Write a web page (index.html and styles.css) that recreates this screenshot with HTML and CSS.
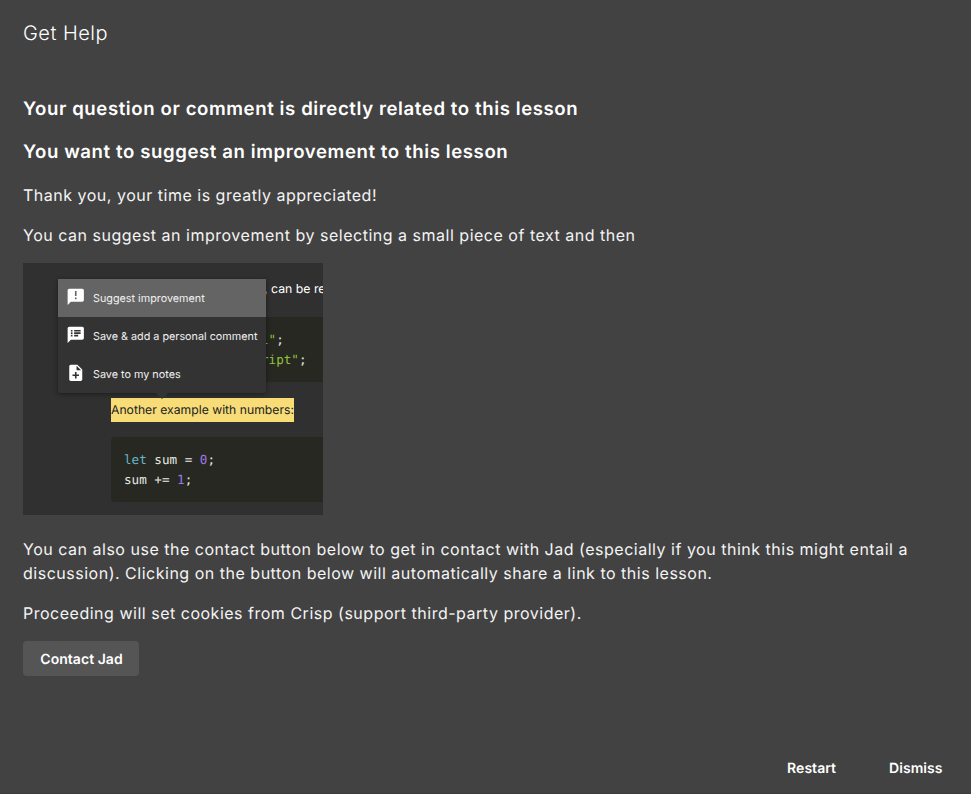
FILE: index.html
```html
<!DOCTYPE html>
<html lang="en">
<head>
<meta charset="utf-8">
<title>Get Help</title>
<link rel="stylesheet" href="styles.css">
</head>
<body>
<main class="dialog">
  <h1 class="title"><span>Get Help</span></h1>
  <section class="content">
    <h2 class="heading"><span>Your question or comment is directly related to this lesson</span></h2>
    <h2 class="heading"><span>You want to suggest an improvement to this lesson</span></h2>
    <p><span>Thank you, your time is greatly appreciated!</span></p>
    <p><span>You can suggest an improvement by selecting a small piece of text and then</span></p>
    <div class="preview">
      <div class="lesson">
        <div class="lesson-text"><span>, can be re</span></div>
        <pre class="code code-first"><span class="str">l"</span>;
<span class="str">ript"</span>;</pre>
        <div class="marked-row"><mark>Another example with numbers:</mark></div>
        <pre class="code"><span class="kw">let</span> sum = <span class="num">0</span>;
sum += <span class="num">1</span>;</pre>
      </div>
      <div class="menu">
        <div class="item active"><svg viewBox="0 0 24 24"><path d="M20 2H4c-1.1 0-1.99.9-1.99 2L2 22l4-4h14c1.1 0 2-.9 2-2V4c0-1.1-.9-2-2-2zm-7 9h-2V5h2v6zm0 4h-2v-2h2v2z"/></svg><span>Suggest improvement</span></div>
        <div class="item"><svg viewBox="0 0 24 24"><path d="M20 2H4c-1.1 0-1.99.9-1.99 2L2 22l4-4h14c1.1 0 2-.9 2-2V4c0-1.1-.9-2-2-2zM8 14H6v-2h2v2zm0-3H6V9h2v2zm0-3H6V6h2v2zm7 6h-5v-2h5v2zm3-3h-8V9h8v2zm0-3h-8V6h8v2z"/></svg><span>Save &amp; add a personal comment</span></div>
        <div class="item"><svg viewBox="0 0 24 24"><path d="M14 2H6c-1.1 0-1.99.9-1.99 2L4 20c0 1.1.89 2 1.99 2H18c1.1 0 2-.9 2-2V8l-6-6zm2 14h-3v3h-2v-3H8v-2h3v-3h2v3h3v2zm-3-7V3.5L18.5 9H13z"/></svg><span>Save to my notes</span></div>
      </div>
    </div>
    <p><span>You can also use the contact button below to get in contact with Jad (especially if you think this might entail a discussion). Clicking on the button below will automatically share a link to this lesson.</span></p>
    <p><span>Proceeding will set cookies from Crisp (support third-party provider).</span></p>
    <button class="contact" type="button"><span>Contact Jad</span></button>
  </section>
  <footer class="actions">
    <button type="button"><span>Restart</span></button>
    <button type="button"><span>Dismiss</span></button>
  </footer>
</main>
</body>
</html>
```
FILE: styles.css
```css
* { box-sizing: border-box; }
body {
  margin: 0;
  background: #424242;
  color: #fff;
  font-family: Inter, sans-serif;
  font-size: 16px;
  font-weight: 400;
  line-height: 24px;
  letter-spacing: 0.51px;
  text-rendering: geometricPrecision;
}
.dialog {
  display: flex;
  flex-direction: column;
  height: 794px;
  padding: 17px 23px 8px;
  border-bottom: 1px solid #3b3b3b;
}
.title {
  margin: 0 0 44px;
  font-size: 20px;
  font-weight: 300;
  line-height: 32px;
  letter-spacing: 0.48px;
}
.content { flex: 1; }
.content p { color: #f4f4f4; }
.heading {
  margin: 0 0 11px;
  font-size: 18.6px;
  font-weight: 600;
  line-height: 32px;
  letter-spacing: 0.59px;
}
.heading + p { margin-top: 15px; }
p { margin: 0 0 16px; }
.preview {
  position: relative;
  width: 300px;
  height: 252px;
  margin-bottom: 22px;
  overflow: hidden;
  background: #303030;
  letter-spacing: 0;
}
.lesson { padding: 14px 0 0 88px; }
.lesson-text {
  padding-left: 153px;
  font-size: 12.3px;
  white-space: nowrap;
}
.code {
  height: 65px;
  margin: 15px 0 0;
  padding: 13px;
  border-radius: 4px 0 0 4px;
  background: #272822;
  color: #e8e8e2;
  font: 12.6px/20px "DejaVu Sans Mono", monospace;
}
.code-first {
  margin-top: 16px;
  padding-left: 150px;
}
.str { color: #92c23a; }
.kw { color: #66b5c8; }
.num { color: #9d79e8; }
.marked-row { height: 24px; margin-top: 16px; }
mark {
  display: block;
  width: 183px;
  background: #f7dc78;
  color: #222;
  font-size: 12.2px;
  white-space: nowrap;
}
.menu {
  position: absolute;
  top: 16px;
  left: 35px;
  width: 208px;
  border-radius: 2px;
  background: #333;
  box-shadow: 0 1px 5px rgba(0, 0, 0, 0.45);
}
.menu::after {
  content: "";
  position: absolute;
  top: 100%;
  left: 98px;
  border: 6px solid transparent;
  border-top-color: #333;
  border-bottom: 0;
}
.item {
  display: flex;
  align-items: center;
  gap: 8px;
  height: 38px;
  padding-left: 7.5px;
  color: #f0f0f0;
  font-size: 10.8px;
  white-space: nowrap;
}
.item span { padding-top: 1px; }
.item svg {
  width: 19.5px;
  height: 19.5px;
  margin-top: -3px;
  fill: #fff;
}
.item.active { background: #646464; }
button {
  border: 0;
  border-radius: 4px;
  background: none;
  color: #fff;
  font: 600 14px/24px Inter, sans-serif;
  letter-spacing: 0.04px;
  text-rendering: inherit;
}
.contact {
  display: block;
  width: 116px;
  height: 35px;
  padding: 2px 0 0 1px;
  background: #555;
}
.actions {
  display: flex;
  justify-content: flex-end;
  gap: 41px;
}
.actions button { height: 35px; padding: 2px 5.5px 0 6.5px; }
```
